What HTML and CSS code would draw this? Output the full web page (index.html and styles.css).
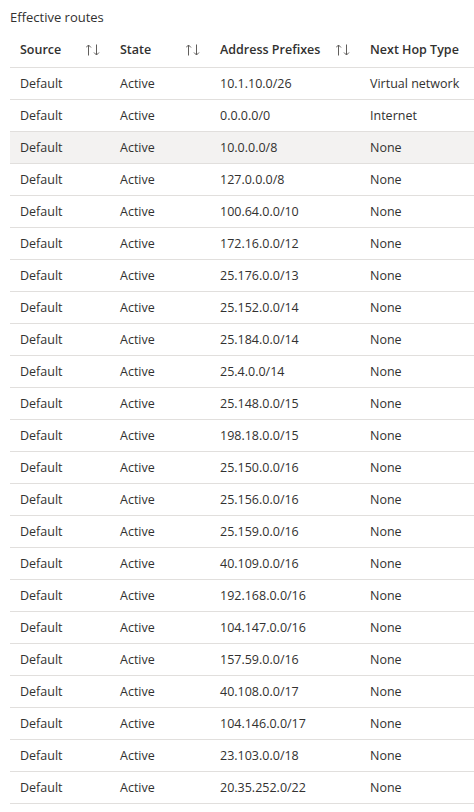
FILE: index.html
```html
<!DOCTYPE html>
<html>
<head>
<meta charset="utf-8">
<link rel="stylesheet" href="styles.css">
</head>
<body>
<div class="page">
  <div class="title">Effective routes</div>
  <table class="routes">
    <colgroup>
      <col class="c1"><col class="c2"><col class="c3"><col class="c4">
    </colgroup>
    <thead>
      <tr>
        <th><div class="hcell"><span>Source</span><svg class="sort" width="14" height="12" viewBox="0 0 14 12"><path d="M2.5 11.5V1M0 3.5L2.5 1 5 3.5M10.5 0.5V11M8 8.5L10.5 11 13 8.5"/></svg></div></th>
        <th><div class="hcell"><span>State</span><svg class="sort" width="14" height="12" viewBox="0 0 14 12"><path d="M2.5 11.5V1M0 3.5L2.5 1 5 3.5M10.5 0.5V11M8 8.5L10.5 11 13 8.5"/></svg></div></th>
        <th><div class="hcell"><span>Address Prefixes</span><svg class="sort" width="14" height="12" viewBox="0 0 14 12"><path d="M2.5 11.5V1M0 3.5L2.5 1 5 3.5M10.5 0.5V11M8 8.5L10.5 11 13 8.5"/></svg></div></th>
        <th><div class="hcell"><span>Next Hop Type</span></div></th>
      </tr>
    </thead>
    <tbody>
      <tr><td>Default</td><td>Active</td><td>10.1.10.0/26</td><td>Virtual network</td></tr>
      <tr><td>Default</td><td>Active</td><td>0.0.0.0/0</td><td>Internet</td></tr>
      <tr class="hover"><td>Default</td><td>Active</td><td>10.0.0.0/8</td><td>None</td></tr>
      <tr><td>Default</td><td>Active</td><td>127.0.0.0/8</td><td>None</td></tr>
      <tr><td>Default</td><td>Active</td><td>100.64.0.0/10</td><td>None</td></tr>
      <tr><td>Default</td><td>Active</td><td>172.16.0.0/12</td><td>None</td></tr>
      <tr><td>Default</td><td>Active</td><td>25.176.0.0/13</td><td>None</td></tr>
      <tr><td>Default</td><td>Active</td><td>25.152.0.0/14</td><td>None</td></tr>
      <tr><td>Default</td><td>Active</td><td>25.184.0.0/14</td><td>None</td></tr>
      <tr><td>Default</td><td>Active</td><td>25.4.0.0/14</td><td>None</td></tr>
      <tr><td>Default</td><td>Active</td><td>25.148.0.0/15</td><td>None</td></tr>
      <tr><td>Default</td><td>Active</td><td>198.18.0.0/15</td><td>None</td></tr>
      <tr><td>Default</td><td>Active</td><td>25.150.0.0/16</td><td>None</td></tr>
      <tr><td>Default</td><td>Active</td><td>25.156.0.0/16</td><td>None</td></tr>
      <tr><td>Default</td><td>Active</td><td>25.159.0.0/16</td><td>None</td></tr>
      <tr><td>Default</td><td>Active</td><td>40.109.0.0/16</td><td>None</td></tr>
      <tr><td>Default</td><td>Active</td><td>192.168.0.0/16</td><td>None</td></tr>
      <tr><td>Default</td><td>Active</td><td>104.147.0.0/16</td><td>None</td></tr>
      <tr><td>Default</td><td>Active</td><td>157.59.0.0/16</td><td>None</td></tr>
      <tr><td>Default</td><td>Active</td><td>40.108.0.0/17</td><td>None</td></tr>
      <tr><td>Default</td><td>Active</td><td>104.146.0.0/17</td><td>None</td></tr>
      <tr><td>Default</td><td>Active</td><td>23.103.0.0/18</td><td>None</td></tr>
      <tr><td>Default</td><td>Active</td><td>20.35.252.0/22</td><td>None</td></tr>
    </tbody>
  </table>
</div>
</body>
</html>
```
FILE: styles.css
```css
html, body {
  margin: 0;
  padding: 0;
  background: #ffffff;
}
body {
  font-family: "Open Sans", "Noto Sans", sans-serif;
  font-size: 12.5px;
  color: #323130;
}
.page {
  padding: 8px 0 0 10px;
}
.title {
  font-size: 13px;
  line-height: 18px;
  height: 18px;
}
.routes {
  border-collapse: collapse;
  table-layout: fixed;
  width: 464px;
  margin-top: 9px;
}
.c1 { width: 100px; }
.c2 { width: 100px; }
.c3 { width: 150px; }
.c4 { width: 114px; }
.routes th {
  height: 32px;
  padding: 0;
  text-align: left;
  font-weight: 600;
  border-bottom: 1px solid #e1dfdd;
}
.hcell {
  display: flex;
  align-items: center;
  padding: 0 10px 3px 10px;
  height: 29px;
}
.sort {
  margin-left: auto;
  fill: none;
  stroke: #605e5c;
  stroke-width: 1;
}
.routes td {
  height: 31px;
  padding: 0 0 0 10px;
  border-bottom: 1px solid #e1dfdd;
  white-space: nowrap;
  overflow: hidden;
}
.routes tr.hover td {
  background: #f3f2f1;
}
```
